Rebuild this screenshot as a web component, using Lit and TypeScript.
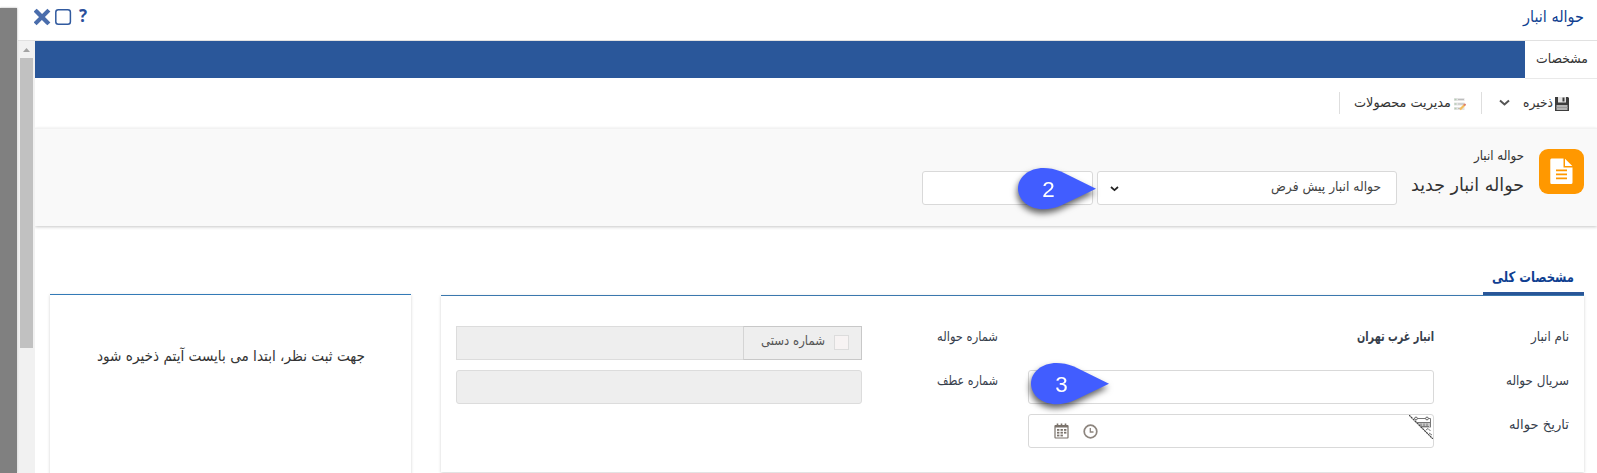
import { LitElement, html, css, svg } from "lit";
import { customElement, property } from "lit/decorators.js";

/** A line of Persian text set to a fixed measure; the baseline is 15px below the top. */
@customElement("fa-text")
class FaText extends LitElement {
  @property() text = "";
  @property({ type: Number }) w = 50;
  @property({ type: Number }) size = 13.5;
  static styles = css`
    :host { display: block; flex: none; height: 20px; }
    svg { display: block; overflow: visible; direction: rtl; }
    text { fill: currentColor; font-family: "DejaVu Sans", sans-serif; }
  `;
  render() {
    return html`<svg width=${this.w} height="20">
      <text x=${this.w} y="15" font-size=${this.size} textLength=${this.w} lengthAdjust="spacingAndGlyphs">${this.text}</text>
    </svg>`;
  }
}

/** Numbered pointer laid over a field. */
@customElement("step-marker")
class StepMarker extends LitElement {
  @property() n = "";
  static styles = css`
    :host { display: block; width: 78px; height: 42px; }
    svg { display: block; overflow: visible; filter: drop-shadow(-1px 4px 3px rgba(0, 0, 0, 0.6)); }
    text { font: 22.5px "Liberation Sans", sans-serif; fill: #fff; }
  `;
  render() {
    return html`<svg width="78" height="42">
      <path d="M78 20.700 L43 3.600 C37 1 31 0 25.500 0 C11 0 0 9 0 20.500 C0 32 11 41.300 25.500 41.300 C31 41.300 37 40 43 37.500 Z" fill="#415dff" />
      <text x="30.500" y="28.500" text-anchor="middle">${this.n}</text>
    </svg>`;
  }
}

const days = [0, 1, 2].flatMap((r) => [0, 1, 2].map((c) => [r, c])).filter(([r, c]) => !(r === 2 && c === 2));

@customElement("app-root")
class AppRoot extends LitElement {
  static styles = css`
    :host { display: flex; direction: rtl; width: 1597px; height: 473px; overflow: hidden; background: #fff; font-family: "DejaVu Sans", sans-serif; color: #333; }
    * { box-sizing: border-box; }
    svg { display: block; flex: none; }
    .backdrop { width: 17px; margin-top: 8px; background: #808080; box-shadow: 0 0 2px #aaa; flex: none; }
    .window { width: 1579px; margin-left: 1px; display: flex; flex-direction: column; }
    .title { height: 41px; flex: none; border-bottom: 1px solid #e1e1e1; display: flex; justify-content: space-between; padding: 7px 13px 0 16px; color: #103f91; }
    .controls { direction: ltr; display: flex; align-items: flex-start; }
    .help { font: bold 17px/24px "Open Sans", sans-serif; color: #2a4f9b; margin: -3px 0 0 7px; }
    .body { flex: 1; display: flex; min-height: 0; }
    .content { width: 1562px; display: flex; flex-direction: column; }
    .scroll { width: 17px; background: #f1f1f1; display: flex; flex-direction: column; align-items: center; }
    .scroll svg { margin-top: 7px; }
    .thumb { width: 13px; height: 290px; margin-top: 6px; background: #c1c1c1; }
    .tabs { height: 37px; flex: none; display: flex; background: #2a579a; }
    .tab { width: 72px; height: 38px; background: #fff; border-bottom: 1px solid #e9e9e9; padding: 7px 9px 0 0; }
    .tools { height: 50px; flex: none; display: flex; padding-right: 28px; }
    .tools > fa-text { margin-top: 14px; }
    .sep { width: 1px; height: 22px; margin-top: 14px; background: #dedede; }
    .end { margin-right: 14px; }
    .save { margin: 19px 0 0 2px; }
    .chev { margin: 21px 13px 0 17px; }
    .list { margin: 20px 15px 0 3px; }
    .record { height: 98px; flex: none; background: #f9f9f9; border-top: 1px solid #f2f2f2; box-shadow: 0 1px 3px rgba(0, 0, 0, 0.22); display: flex; padding: 20px 13px 0 0; }
    .badge { width: 45px; height: 45px; border-radius: 9px; background: #ff9800; padding: 9px 0 0 11px; margin-left: 15px; direction: ltr; }
    .names { display: flex; flex-direction: column; gap: 11px; margin-top: -4px; margin-left: 14px; }
    .field { height: 34px; border: 1px solid #d9d9d9; border-radius: 3px; background: #fff; position: relative; flex: none; }
    .record .field { margin-top: 22px; }
    .select { width: 300px; margin-left: 4px; display: flex; justify-content: space-between; padding: 4px 15px 0 12px; color: #444; }
    .select svg { margin-top: 9px; }
    .short { width: 171px; }
    .marker { position: absolute; direction: ltr; }
    .m2 { left: 95px; top: -4px; }
    .m3 { left: 2px; top: -8px; }
    .main { flex: 1; display: flex; padding: 40px 13px 0 15px; justify-content: space-between; }
    .general { width: 1143px; display: flex; flex-direction: column; }
    .heading { width: 101px; height: 29px; border-bottom: 3px solid #2a579a; padding: 1px 10px 0 0; color: #103f91; font-weight: bold; }
    .card { border-top: 1px solid #3b78ae; box-shadow: 0 1px 3px rgba(0, 0, 0, 0.18); background: #fff; }
    .form { height: 177px; display: flex; padding: 30px 15px 0 0; color: #37404c; }
    .col { display: grid; grid-template-rows: 34px 34px 34px; row-gap: 10px; }
    .one { grid-template-columns: 135px 406px; }
    .two { grid-template-columns: 136px 406px; margin-right: 30px; }
    .bold { font-weight: bold; }
    .off { background: #eee; border-color: #dcdcdc; }
    .group { display: flex; }
    .addon { width: 119px; background: #eee; border: 1px solid #c8c8c8; border-left-color: #d4d4d4; display: flex; padding: 3px 12px 0 0; color: #555; }
    .check { width: 15px; height: 15px; border: 1px solid #dcdcdc; background: #f7f3f3; margin: 5px 0 0 9px; }
    .group .field { width: 287px; border-radius: 0; border-right: 0; }
    .date { direction: ltr; display: flex; padding-left: 25px; }
    .cal { margin: 8px 14px 0 0; }
    .clock { margin-top: 9px; }
    .corner { margin-left: auto; }
    .notes { width: 361px; height: 200px; margin-top: 28px; border-top-color: #337ab7; padding: 51px 46px 0 0; }
  `;

  render() {
    return html`
      <div class="window">
        <div class="title">
          <fa-text text="حواله انبار" w="61" size="16"></fa-text>
          <div class="controls">
            <svg width="38" height="20" viewBox="0 0 38 20">
              <path d="M2.600 4.600 L13.400 15.400 M13.400 4.600 L2.600 15.400" stroke="#4a6dac" stroke-width="4.200" stroke-linecap="square" />
              <rect x="21.800" y="2.700" width="14.600" height="14.600" rx="2.500" fill="none" stroke="#315a9f" stroke-width="1.500" />
            </svg>
            <div class="help">?</div>
          </div>
        </div>
        <div class="body">
          <div class="content">
            <div class="tabs"><div class="tab"><fa-text text="مشخصات" w="52"></fa-text></div></div>
            <div class="tools">
              <svg class="save" width="14" height="14" viewBox="0 0 14 14">
                <path d="M0 0 H13 L14 1 V14 H0 Z" fill="#3d3d3d" />
                <path d="M3 0 H11 V5.500 H3 Z" fill="#e4e4e4" /><path d="M7.500 0.500 H9.500 V4.500 H7.500 Z" fill="#3d3d3d" />
                <path d="M1.500 8 H12.500 V13 H1.500 Z" fill="#b4b4b4" /><path d="M1.500 10.500 H12.500" stroke="#999" />
              </svg>
              <fa-text text="ذخیره" w="30"></fa-text>
              <svg class="chev" width="11" height="8"><path d="M1 1.500 L5.500 5.500 L10 1.500" fill="none" stroke="#555" stroke-width="2" /></svg>
              <div class="sep"></div>
              <svg class="list" width="12" height="13" viewBox="0 0 12 13">
                <path d="M0 0 H10.500 V3 H0 Z M0 4.500 H10.500 V7.500 H0 Z M0 9 H10.500 V12 H0 Z" fill="#e4e4e4" />
                <path d="M0.500 1.500 H2.500 M0.500 6 H2.500 M0.500 10.500 H2.500" stroke="#b5cbb5" stroke-width="1.300" />
                <path d="M4 1.500 H10 M4 6 H10 M4 10.500 H7" stroke="#bdbdbd" />
                <path d="M6 11.500 L10.500 7" stroke="#f3bd5c" stroke-width="2.200" /><path d="M10 7.500 L11.500 6" stroke="#df806a" stroke-width="2" />
              </svg>
              <fa-text text="مدیریت محصولات" w="97"></fa-text>
              <div class="sep end"></div>
            </div>
            <div class="record">
              <div class="badge">
                <svg width="23" height="27" viewBox="0 0 23 27">
                  <path d="M1.500 0.500 H13.500 V9.500 H22.500 V24.500 Q22.500 26 21 26 H1.500 Q0.300 26 0.300 24.500 V2 Q0.300 0.500 1.500 0.500 Z M15 0.800 L22.300 8 H15 Z" fill="#fff" />
                  <path d="M6 12.300 H17 M6 16.300 H17 M6 20.300 H17" stroke="#ff9800" stroke-width="1.700" />
                </svg>
              </div>
              <div class="names">
                <fa-text text="حواله انبار" w="50" size="13"></fa-text>
                <fa-text text="حواله انبار جدید" w="113" size="18"></fa-text>
              </div>
              <div class="field select">
                <fa-text text="حواله انبار پیش فرض" w="110"></fa-text>
                <svg width="10" height="8"><path d="M1 2 L4.500 5.200 L8 2" fill="none" stroke="#222" stroke-width="1.700" /></svg>
              </div>
              <div class="field short"><step-marker class="marker m2" n="2"></step-marker></div>
            </div>
            <div class="main">
              <div class="general">
                <div class="heading"><fa-text text="مشخصات کلی" w="82" size="14.5"></fa-text></div>
                <div class="card form">
                  <div class="col one">
                    <fa-text text="نام انبار" w="38"></fa-text>
                    <fa-text class="bold" text="انبار غرب تهران" w="77"></fa-text>
                    <fa-text text="سریال حواله" w="63"></fa-text>
                    <div class="field"><step-marker class="marker m3" n="3"></step-marker></div>
                    <fa-text text="تاریخ حواله" w="60"></fa-text>
                    <div class="field date">
                      <svg class="cal" width="15" height="16" viewBox="0 0 15 16">
                        <rect x="1" y="2.500" width="13" height="12.500" rx="0.500" fill="none" stroke="#7b736c" stroke-width="1.200" />
                        <path d="M1 3.500 H14" stroke="#7b736c" stroke-width="2" />
                        <path d="M3.500 0.500 V4 M7.500 0.500 V4 M11.500 0.500 V4" stroke="#7b736c" stroke-width="1.600" />
                        ${days.map(([r, c]) => svg`<rect x=${3 + c * 3.5} y=${6 + r * 2.8} width="2.400" height="1.800" fill="#7b736c" />`)}
                      </svg>
                      <svg class="clock" width="15" height="15" viewBox="0 0 15 15">
                        <circle cx="7.500" cy="7.500" r="6.300" fill="none" stroke="#8d857e" stroke-width="1.700" />
                        <path d="M7.300 4 V8 H10.500" fill="none" stroke="#8d857e" stroke-width="1.300" />
                      </svg>
                      <svg class="corner" width="24" height="24" viewBox="0 0 24 24">
                        <path d="M7 7 H22 V13 H13 Z" fill="#c9c9c9" />
                        <path d="M0 0 L24 24" stroke="#444" stroke-width="1.200" stroke-dasharray="2.200 0.500" />
                        <path d="M5 3.500 H21.500 V12 M7 7.500 H21 M12 11.500 H20 M12 8.500 V12 M15 8.500 V12 M18 8.500 V12 M17 15 L19 13.500 L21.500 16 M20 18 L23 20" fill="none" stroke="#777" />
                        <circle cx="7" cy="3.500" r="1.400" fill="#fff" stroke="#666" /><circle cx="18" cy="3.500" r="1.400" fill="#fff" stroke="#666" />
                      </svg>
                    </div>
                  </div>
                  <div class="col two">
                    <fa-text text="شماره حواله" w="61"></fa-text>
                    <div class="group">
                      <div class="addon"><div class="check"></div><fa-text text="شماره دستی" w="64"></fa-text></div>
                      <div class="field off"></div>
                    </div>
                    <fa-text text="شماره عطف" w="61"></fa-text>
                    <div class="field off"></div>
                  </div>
                </div>
              </div>
              <div class="card notes"><fa-text text="جهت ثبت نظر، ابتدا می بایست آیتم ذخیره شود" w="268" size="15"></fa-text></div>
            </div>
          </div>
          <div class="scroll">
            <svg width="7" height="4"><path d="M0 4 L3.500 0 L7 4 Z" fill="#a3a3a3" /></svg>
            <div class="thumb"></div>
          </div>
        </div>
      </div>
      <div class="backdrop"></div>
    `;
  }
}
